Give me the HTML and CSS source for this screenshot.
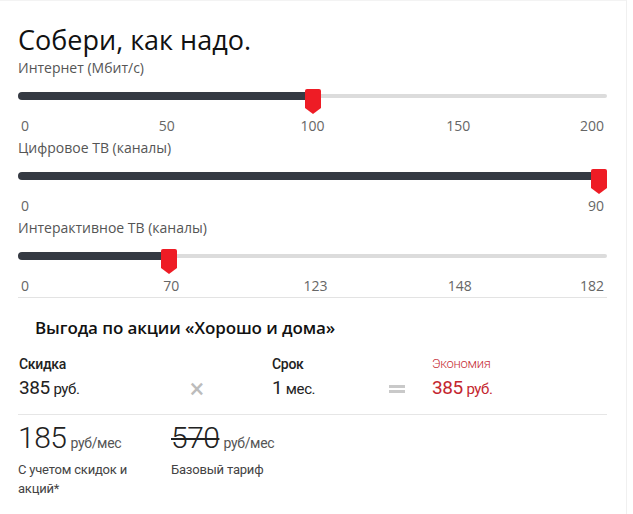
FILE: index.html
```html
<!DOCTYPE html>
<html lang="ru">
<head>
<meta charset="utf-8">
<title>Собери, как надо.</title>
<link rel="stylesheet" href="styles.css">
</head>
<body>
<div class="card">
  <h1 class="title">Собери, как надо.</h1>

  <div class="slider-block">
    <div class="slider-label">Интернет (Мбит/с)</div>
    <div class="slider">
      <div class="track"></div>
      <div class="fill" style="width:50%"></div>
      <svg class="thumb" style="left:calc(50% - 8px)" width="16" height="25" viewBox="0 0 16 25"><path d="M2 0H14Q16 0 16 2V19L8 25L0 19V2Q0 0 2 0Z"/></svg>
    </div>
    <div class="ticks"><span>0</span><span>50</span><span>100</span><span>150</span><span>200</span></div>
  </div>

  <div class="slider-block">
    <div class="slider-label">Цифровое ТВ (каналы)</div>
    <div class="slider">
      <div class="track"></div>
      <div class="fill" style="width:100%"></div>
      <svg class="thumb" style="left:calc(100% - 16px)" width="16" height="25" viewBox="0 0 16 25"><path d="M2 0H14Q16 0 16 2V19L8 25L0 19V2Q0 0 2 0Z"/></svg>
    </div>
    <div class="ticks"><span>0</span><span>90</span></div>
  </div>

  <div class="slider-block last">
    <div class="slider-label">Интерактивное ТВ (каналы)</div>
    <div class="slider">
      <div class="track"></div>
      <div class="fill" style="width:25.6%"></div>
      <svg class="thumb" style="left:calc(25.6% - 8px)" width="16" height="25" viewBox="0 0 16 25"><path d="M2 0H14Q16 0 16 2V19L8 25L0 19V2Q0 0 2 0Z"/></svg>
    </div>
    <div class="ticks"><span>0</span><span class="nudge">70</span><span>123</span><span>148</span><span>182</span></div>
  </div>

  <div class="promo">
    <h2 class="promo-title">Выгода по акции «Хорошо и дома»</h2>
    <div class="calc">
      <div class="calc-col col-discount">
        <div class="calc-label">Скидка</div>
        <div class="calc-value"><span class="num">385</span> <span class="unit">руб.</span></div>
      </div>
      <div class="op op-times">×</div>
      <div class="calc-col col-term">
        <div class="calc-label">Срок</div>
        <div class="calc-value"><span class="num">1</span> <span class="unit">мес.</span></div>
      </div>
      <div class="op op-equals"><span class="eq"></span></div>
      <div class="calc-col col-saving">
        <div class="calc-label red-label">Экономия</div>
        <div class="calc-value red"><span class="num">385</span> <span class="unit">руб.</span></div>
      </div>
    </div>
  </div>

  <div class="totals">
    <div class="total">
      <div class="price"><span class="big">185</span> <span class="per">руб/мес</span></div>
      <div class="caption">С учетом скидок и<br>акций*</div>
    </div>
    <div class="total">
      <div class="price"><span class="big strike">570</span> <span class="per">руб/мес</span></div>
      <div class="caption">Базовый тариф</div>
    </div>
  </div>
</div>
</body>
</html>
```

FILE: styles.css
```css
html, body {
  margin: 0;
  padding: 0;
  background: #ffffff;
}

body {
  font-family: "Open Sans", "Liberation Sans", sans-serif;
  color: #222;
}

.card {
  width: 589px;
  min-height: 490px;
  box-sizing: content-box;
  padding: 23px 19px 0 18px;
  border-top: 1px solid #f3f3f3;
  border-right: 1px solid #f0f0f0;
}

.title {
  margin: 0 0 2px;
  font-size: 27px;
  line-height: 32px;
  font-weight: 400;
  color: #111;
}

.slider-block {
  height: 80px;
}

.slider-block.last {
  height: 79px;
  border-bottom: 1px solid #e3e3e3;
}

.slider-label {
  font-size: 14px;
  line-height: 20px;
  color: #555;
}

.slider {
  position: relative;
  height: 36px;
}

.track {
  position: absolute;
  left: 0;
  right: 0;
  top: 16px;
  height: 4px;
  background: #dcdcdc;
  border-radius: 2px;
}

.fill {
  position: absolute;
  left: 0;
  top: 14px;
  height: 8px;
  background: #353a43;
  border-radius: 4px 0 0 4px;
}

.thumb {
  position: absolute;
  top: 11px;
  fill: #ee1c25;
}

.ticks {
  display: flex;
  justify-content: space-between;
  padding: 2px 3px 0 3px;
  font-size: 14px;
  line-height: 20px;
  color: #666;
}

.ticks span {
  width: 0;
  display: flex;
  justify-content: center;
  white-space: nowrap;
}

.ticks span:first-child {
  justify-content: flex-start;
}

.ticks span:last-child {
  justify-content: flex-end;
}

.ticks span.nudge {
  padding-left: 6px;
}

.promo {
  padding: 18px 0 13px;
  border-bottom: 1px solid #e6e6e6;
  font-family: "Roboto", "Liberation Sans", sans-serif;
}

.promo-title {
  margin: 0 0 15px 17px;
  font-family: "Open Sans", "Liberation Sans", sans-serif;
  font-size: 17px;
  line-height: 24px;
  font-weight: 600;
  color: #111;
  letter-spacing: -0.1px;
}

.calc {
  display: flex;
  align-items: flex-end;
  padding-left: 1px;
}

.calc-col {
  display: flex;
  flex-direction: column;
  gap: 3px;
}

.col-discount { width: 160px; }
.col-term { width: 107px; margin-left: 57px; }
.col-saving { margin-left: 17px; }

.calc-label {
  font-size: 14px;
  line-height: 18px;
  font-weight: 500;
  color: #222;
  letter-spacing: -0.3px;
}

.red-label {
  font-size: 13px;
  font-weight: 300;
  color: #c73038;
}

.calc-value {
  line-height: 24px;
  color: #222;
  letter-spacing: -0.4px;
}

.calc-value .num {
  font-size: 19px;
}

.calc-value .unit {
  font-size: 15px;
}

.calc-value.red {
  color: #c4262e;
}

.op {
  width: 36px;
  height: 24px;
  display: flex;
  align-items: center;
  justify-content: center;
  color: #bcbcbc;
}

.op-times {
  font-size: 27px;
  font-weight: 400;
  line-height: 24px;
}

.eq {
  display: block;
  width: 16px;
  height: 2px;
  border-top: 3px solid #c9c9c9;
  border-bottom: 3px solid #c9c9c9;
}

.totals {
  display: flex;
  padding-top: 6px;
  font-family: "Roboto", "Liberation Sans", sans-serif;
}

.total {
  width: 153px;
}

.price {
  line-height: 34px;
  color: #222;
}

.big {
  font-size: 30px;
  font-weight: 300;
  letter-spacing: -0.5px;
}

.strike {
  text-decoration: line-through;
  text-decoration-thickness: 2px;
}

.per {
  font-size: 14px;
  color: #555;
  letter-spacing: -0.3px;
}

.caption {
  font-size: 13px;
  line-height: 19px;
  color: #444;
  letter-spacing: -0.2px;
}
```
